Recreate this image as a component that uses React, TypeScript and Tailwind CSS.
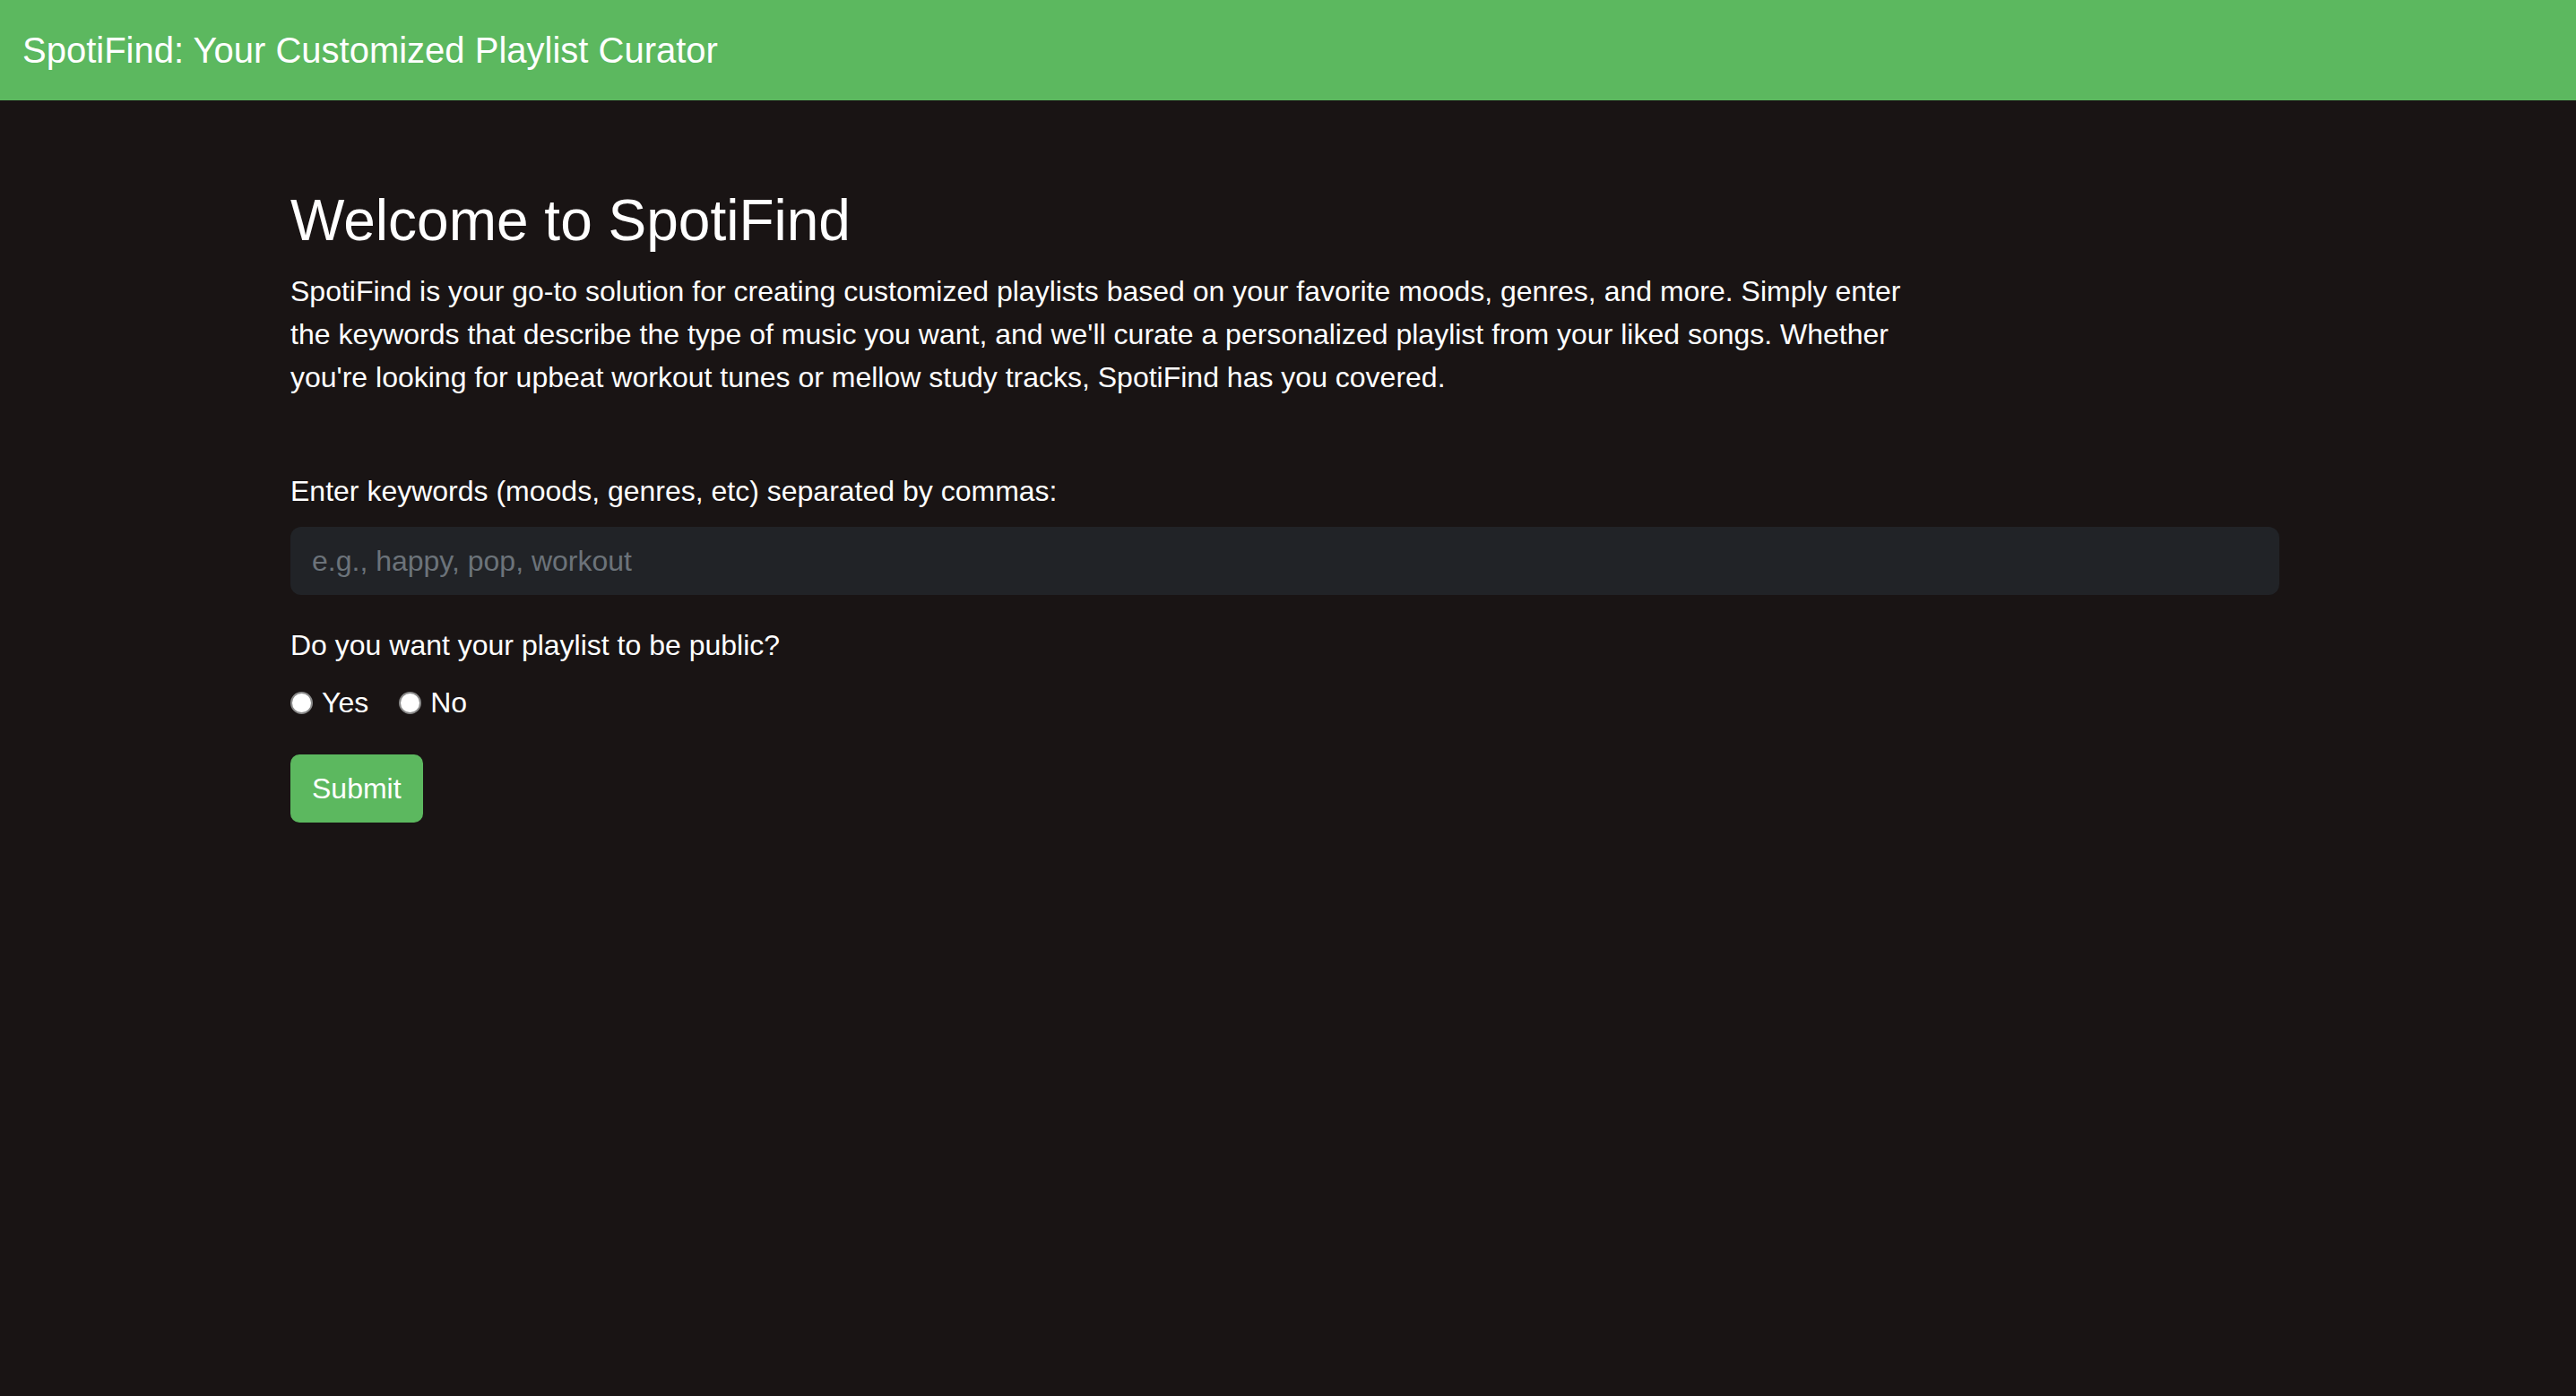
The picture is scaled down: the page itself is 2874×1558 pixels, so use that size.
import { useState } from "react";

// ─── Types ────────────────────────────────────────────────────────────────────

type Visibility = "yes" | "no" | null;

// ─── Header ───────────────────────────────────────────────────────────────────

const Header = () => (
  <header className="h-[112px] bg-[#5cb85f] flex items-center px-[25px]">
    <span className="text-white text-[40px] leading-none">
      SpotiFind: Your Customized Playlist Curator
    </span>
  </header>
);

// ─── Radio ────────────────────────────────────────────────────────────────────

type RadioProps = {
  label: string;
  checked: boolean;
  onChange: () => void;
};

const Radio = ({ label, checked, onChange }: RadioProps) => (
  <label className="flex items-center gap-[10px] cursor-pointer">
    <input
      type="radio"
      name="public"
      checked={checked}
      onChange={onChange}
      className="appearance-none w-[25px] h-[25px] rounded-full bg-white border-[2px] border-[#8a8a8a] checked:border-[8px] checked:border-[#0a66d8]"
    />
    <span>{label}</span>
  </label>
);

// ─── App ──────────────────────────────────────────────────────────────────────

const App = () => {
  const [keywords, setKeywords] = useState("");
  const [visibility, setVisibility] = useState<Visibility>(null);

  return (
    <div
      className="min-h-screen bg-[#191414] text-white"
      style={{ fontFamily: '"Liberation Sans", Arial, sans-serif' }}
    >
      <Header />

      <main className="w-[2219px] ml-[324px] pt-[96px]">
        {/* Intro */}
        <h1 className="text-[64px] leading-[77px] mb-[16px]">Welcome to SpotiFind</h1>
        <p className="text-[32px] leading-[48px] max-w-[1815px] mb-[79px]">
          SpotiFind is your go-to solution for creating customized playlists based on your
          favorite moods, genres, and more. Simply enter the keywords that describe the type of
          music you want, and we'll curate a personalized playlist from your liked songs. Whether
          you're looking for upbeat workout tunes or mellow study tracks, SpotiFind has you
          covered.
        </p>

        {/* Form */}
        <form className="flex flex-col text-[32px] leading-[48px]" onSubmit={e => e.preventDefault()}>
          <label htmlFor="keywords" className="mb-[16px]">
            Enter keywords (moods, genres, etc) separated by commas:
          </label>
          <input
            id="keywords"
            value={keywords}
            onChange={e => setKeywords(e.target.value)}
            placeholder="e.g., happy, pop, workout"
            className="h-[76px] px-[24px] rounded-[12px] bg-[#212327] text-white placeholder:text-[#6c737a] outline-none mb-[32px]"
          />

          <span className="mb-[16px]">Do you want your playlist to be public?</span>
          <div className="flex items-center gap-[34px] mb-[34px]">
            <Radio label="Yes" checked={visibility === "yes"} onChange={() => setVisibility("yes")} />
            <Radio label="No" checked={visibility === "no"} onChange={() => setVisibility("no")} />
          </div>

          <div>
            <button
              type="submit"
              className="h-[76px] px-[24px] rounded-[10px] bg-[#5cb85f] text-white text-[32px]"
            >
              Submit
            </button>
          </div>
        </form>
      </main>
    </div>
  );
};

export default App;
